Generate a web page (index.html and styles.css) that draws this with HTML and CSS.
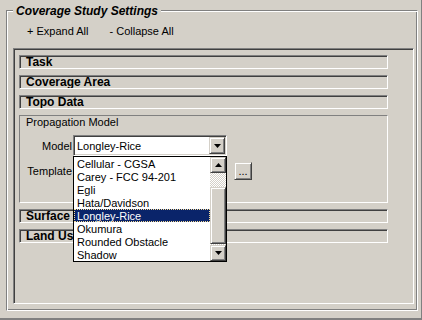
FILE: index.html
```html
<!DOCTYPE html>
<html lang="en">
<head>
    <meta charset="UTF-8">
    <title>Coverage Study Settings</title>
    <link rel="stylesheet" href="styles.css">
</head>
<body>
    <div class="window">
        <div class="group">
            <div class="group-title">Coverage Study Settings</div>
            <div class="links">
                <span>+ Expand All</span>
                <span>- Collapse All</span>
            </div>
            <div class="panel">
                <div class="bar">Task</div>
                <div class="bar">Coverage Area</div>
                <div class="bar">Topo Data</div>
                <div class="section">
                    <div class="section-title">Propagation Model</div>
                    <div class="row">
                        <label>Model</label>
                        <div class="combo">
                            <span class="combo-text">Longley-Rice</span>
                            <span class="btn3d drop-btn">
                                <svg width="7" height="4" viewBox="0 0 7 4"><polygon points="0,0 7,0 3.5,4" fill="#000"/></svg>
                            </span>
                            <div class="list">
                                <div class="items">
                                    <div class="item">Cellular - CGSA</div>
                                    <div class="item">Carey - FCC 94-201</div>
                                    <div class="item">Egli</div>
                                    <div class="item">Hata/Davidson</div>
                                    <div class="item selected">Longley-Rice</div>
                                    <div class="item">Okumura</div>
                                    <div class="item">Rounded Obstacle</div>
                                    <div class="item">Shadow</div>
                                </div>
                                <div class="scrollbar">
                                    <span class="btn3d scroll-btn">
                                        <svg width="7" height="4" viewBox="0 0 7 4"><polygon points="0,4 7,4 3.5,0" fill="#000"/></svg>
                                    </span>
                                    <div class="track">
                                        <div class="btn3d thumb"></div>
                                    </div>
                                    <span class="btn3d scroll-btn">
                                        <svg width="7" height="4" viewBox="0 0 7 4"><polygon points="0,0 7,0 3.5,4" fill="#000"/></svg>
                                    </span>
                                </div>
                            </div>
                        </div>
                    </div>
                    <div class="row row-template">
                        <label>Template</label>
                        <div class="combo"></div>
                        <span class="btn3d dots">...</span>
                    </div>
                </div>
                <div class="bar">Surface</div>
                <div class="bar">Land Use</div>
            </div>
        </div>
    </div>
</body>
</html>
```

FILE: styles.css
```css
:root {
    --face: #D4D0C8;
    --shadow: #808080;
    --dark: #404040;
    --light: #FFFFFF;
    --select: #0A246A;
}

html,
body {
    margin: 0;
    background-color: var(--face);
}

body {
    font-family: "Liberation Sans", Tahoma, Arial, sans-serif;
    font-size: 11px;
    color: #000;
}

.window {
    width: 422px;
    height: 320px;
    box-sizing: border-box;
    padding-top: 10px;
    border-right: 1px solid var(--shadow);
    border-bottom: 2px solid var(--shadow);
}

/* etched group box */
.group {
    margin-left: 6px;
    width: 412px;
    height: 301px;
    box-sizing: border-box;
    border-top: 1px solid var(--shadow);
    border-left: 1px solid var(--shadow);
    border-right: 1px solid var(--light);
    border-bottom: 1px solid var(--light);
    box-shadow: inset 1px 1px 0 var(--light), inset -1px -1px 0 var(--shadow);
}

.group-title {
    width: fit-content;
    margin: -7px 0 0 6px;
    padding: 0 3px;
    background-color: var(--face);
    font-size: 12px;
    line-height: 15px;
    font-weight: bold;
    font-style: italic;
}

.links {
    display: flex;
    gap: 21px;
    margin: 6px 0 10px 0;
    padding-left: 20px;
    line-height: 13px;
}

/* sunken panel */
.panel {
    margin-left: 6px;
    width: 401px;
    height: 256px;
    box-sizing: border-box;
    padding: 6px 0 0 5px;
    border-top: 1px solid var(--shadow);
    border-left: 1px solid var(--shadow);
    border-right: 1px solid var(--light);
    border-bottom: 1px solid var(--light);
    box-shadow: inset 1px 1px 0 var(--dark);
}

.bar,
.section {
    width: 369px;
    box-sizing: border-box;
    border-top: 1px solid var(--shadow);
    border-left: 1px solid var(--shadow);
    border-right: 1px solid var(--light);
    border-bottom: 1px solid var(--light);
    box-shadow: inset 1px 1px 0 var(--dark);
}

.bar {
    height: 14px;
    margin-bottom: 6px;
    padding: 1px 0 0 6px;
    font-size: 12px;
    font-weight: bold;
    line-height: 11px;
    overflow: hidden;
}

.section {
    height: 88px;
    margin-bottom: 6px;
    box-shadow: none;
}

.section-title {
    padding: 1px 0 0 6px;
    line-height: 11px;
}

.row {
    display: flex;
    align-items: center;
    margin-top: 7px;
}

.row-template {
    margin-top: 4px;
}

.row label {
    width: 53px;
    box-sizing: border-box;
    padding-right: 1px;
    text-align: right;
}

.combo {
    position: relative;
    display: flex;
    align-items: center;
    width: 154px;
    height: 21px;
    box-sizing: border-box;
    padding-left: 2px;
    background-color: var(--light);
    border-top: 1px solid var(--shadow);
    border-left: 1px solid var(--shadow);
    border-right: 1px solid var(--light);
    border-bottom: 1px solid var(--light);
    box-shadow: inset 1px 1px 0 var(--dark), inset -1px -1px 0 var(--face);
}

.combo-text {
    flex: 1;
    padding-left: 1px;
}

/* raised 3d button */
.btn3d {
    display: flex;
    align-items: center;
    justify-content: center;
    box-sizing: border-box;
    background-color: var(--face);
    border-top: 1px solid var(--face);
    border-left: 1px solid var(--face);
    border-right: 1px solid var(--dark);
    border-bottom: 1px solid var(--dark);
    box-shadow: inset 1px 1px 0 var(--light), inset -1px -1px 0 var(--shadow);
}

.drop-btn {
    width: 16px;
    height: 17px;
    margin-right: 1px;
}

.dots {
    width: 18px;
    height: 18px;
    margin-left: 7px;
    align-items: flex-end;
    padding-bottom: 3px;
    line-height: 9px;
}

/* open dropdown list */
.list {
    position: absolute;
    left: -1px;
    top: 100%;
    z-index: 2;
    display: flex;
    width: 154px;
    height: 106px;
    box-sizing: border-box;
    margin-top: 1px;
    background-color: var(--light);
    border: 1px solid #000;
}

.items {
    flex: 1;
}

.item {
    height: 13px;
    padding-left: 3px;
    line-height: 15px;
    white-space: nowrap;
    overflow: hidden;
}

.item.selected {
    background-color: var(--select);
    color: var(--light);
    outline: 1px dotted #F5DB95;
    outline-offset: -1px;
}

.scrollbar {
    display: flex;
    flex-direction: column;
    width: 16px;
}

.scroll-btn {
    height: 16px;
}

.track {
    flex: 1;
    background: repeating-conic-gradient(var(--light) 0 25%, var(--face) 0 50%) 0 0 / 2px 2px;
}

.thumb {
    height: 57px;
    margin-top: 14px;
}
```
